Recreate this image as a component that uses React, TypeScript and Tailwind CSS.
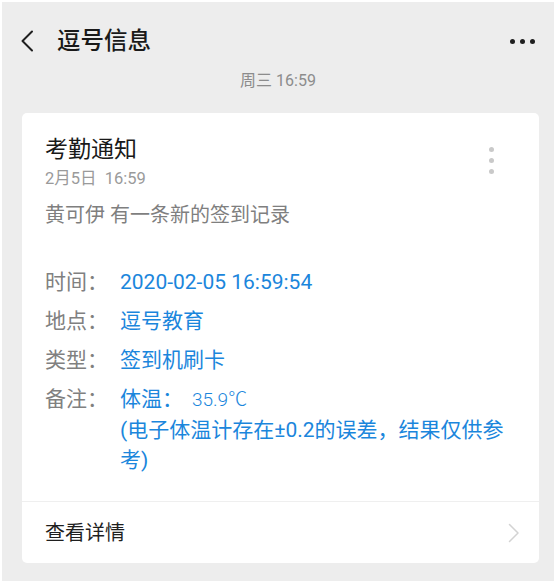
import React from "react"

const font = { fontFamily: "Roboto, 'Noto Sans CJK SC', sans-serif" }

const rows = [
  { label: "时间：", value: "2020-02-05 16:59:54" },
  { label: "地点：", value: "逗号教育" },
  { label: "类型：", value: "签到机刷卡" },
]

export default function App() {
  return (
    <main
      style={font}
      className="min-h-[581px] border-x-2 border-t-2 border-white bg-[#ededed] text-[#191919]"
    >
      <header className="flex items-center justify-between pt-[25px] pl-[18px] pr-[19px]">
        <div className="flex items-center">
          <svg width="14" height="22" viewBox="0 0 14 22" fill="none">
            <polyline
              points="12,1.5 2.5,11 12,20.5"
              stroke="#1f1f1f"
              strokeWidth="2"
              strokeLinecap="round"
              strokeLinejoin="round"
            />
          </svg>
          <h1 className="ml-[23px] text-[23.5px] leading-[28px] font-medium">逗号信息</h1>
        </div>
        <div className="flex items-center gap-[5px]">
          <span className="size-[5px] rounded-full bg-[#1f1f1f]" />
          <span className="size-[5px] rounded-full bg-[#1f1f1f]" />
          <span className="size-[5px] rounded-full bg-[#1f1f1f]" />
        </div>
      </header>

      <p className="mt-[16px] text-center text-[16px] leading-[20px] text-[#8c8c8c]">
        周三 16:59
      </p>

      <section className="mt-[22px] mr-[15px] ml-[20px] rounded-[5px] bg-white">
        <div className="px-[23px] pt-[22px]">
          <div className="flex justify-between">
            <div>
              <h2 className="text-[23px] leading-[30px]">考勤通知</h2>
              <p className="mt-[3px] text-[16.5px] leading-[22px] text-[#9a9a9a]">
                2月5日&nbsp;&nbsp;16:59
              </p>
            </div>
            <div className="mt-[12px] mr-[22px] flex flex-col gap-[6px]">
              <span className="size-[5px] rounded-full bg-[#c9c9c9]" />
              <span className="size-[5px] rounded-full bg-[#c9c9c9]" />
              <span className="size-[5px] rounded-full bg-[#c9c9c9]" />
            </div>
          </div>
          <p className="mt-[11px] text-[20px] leading-[28px] text-[#7f7f7f]">
            黄可伊 有一条新的签到记录
          </p>

          <div className="mt-[38px] flex flex-col gap-[9px] pb-[26px] text-[21px] leading-[30px]">
            {rows.map((r) => (
              <div key={r.label} className="flex">
                <span className="w-[75px] shrink-0 text-[#808080]">{r.label}</span>
                <span className="text-[#1b86dc]">{r.value}</span>
              </div>
            ))}
            <div className="flex">
              <span className="w-[75px] shrink-0 text-[#808080]">备注：</span>
              <div className="min-w-0 flex-1 text-[#1b86dc]">
                <p>
                  体温：
                  <span className="ml-[9px] text-[19px] font-light">35.9℃</span>
                </p>
                <p>(电子体温计存在±0.2的误差，结果仅供参考)</p>
              </div>
            </div>
          </div>
        </div>

        <div className="flex h-[62px] items-center justify-between border-t border-[#efefef] pl-[23px] pr-[19px]">
          <span className="text-[20px] text-[#1f1f1f]">查看详情</span>
          <svg width="12" height="20" viewBox="0 0 12 20" fill="none">
            <polyline
              points="1.5,1.5 10,10 1.5,18.5"
              stroke="#d3d3d3"
              strokeWidth="1.5"
              strokeLinecap="round"
              strokeLinejoin="round"
            />
          </svg>
        </div>
      </section>
    </main>
  )
}
